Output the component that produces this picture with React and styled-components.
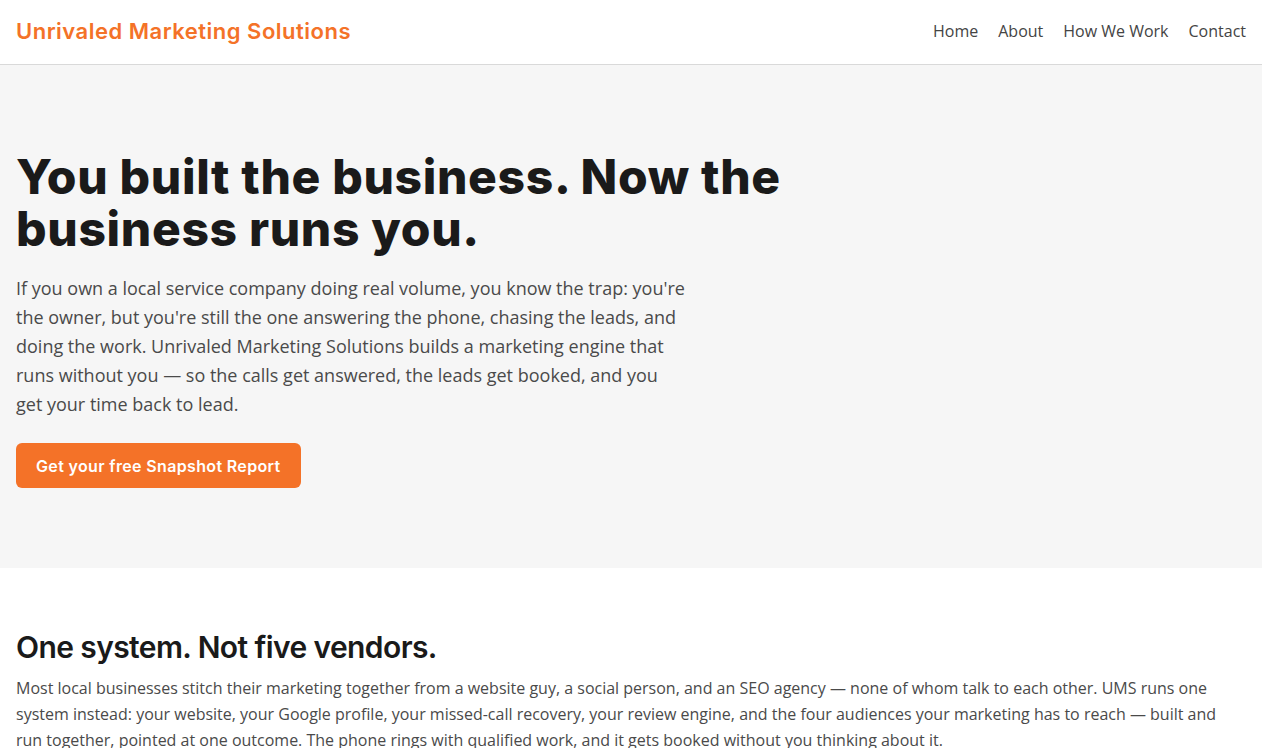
import React from "react";
import styled, { createGlobalStyle } from "styled-components";

const Global = createGlobalStyle`
  * { box-sizing: border-box; }
  body { margin: 0; background: #fff; font-family: "Open Sans", sans-serif; color: #444; }
  h1, h2, p { margin: 0; }
`;

const Header = styled.header`
  height: 65px;
  display: flex;
  align-items: center;
  justify-content: space-between;
  padding: 0 16px 2px;
  border-bottom: 1px solid #d9d9d9;
  background: #fff;
`;

const Logo = styled.a`
  font-family: "Inter", sans-serif;
  font-weight: 600;
  font-size: 22px;
  color: #f47228;
  text-decoration: none;
  letter-spacing: 0.5px;
`;

const Nav = styled.nav`
  display: flex;
  gap: 20px;
`;

const NavLink = styled.a`
  font-size: 16px;
  color: #444;
  text-decoration: none;
`;

const Hero = styled.section`
  background: #f6f6f6;
  padding: 86px 16px 80px;
`;

const Title = styled.h1`
  font-family: "Inter", sans-serif;
  font-weight: 800;
  font-size: 48px;
  line-height: 52px;
  color: #1a1a1a;
  max-width: 830px;
  letter-spacing: 0.65px;
`;

const Lead = styled.p`
  margin-top: 19px;
  font-size: 18px;
  line-height: 29px;
  max-width: 672px;
  color: #4a4a4a;
`;

const Cta = styled.a`
  display: inline-flex;
  align-items: center;
  justify-content: center;
  margin-top: 24px;
  height: 45px;
  padding: 0 20px;
  border-radius: 6px;
  background: #f47228;
  color: #fff;
  font-family: "Inter", sans-serif;
  font-weight: 600;
  font-size: 16px;
  letter-spacing: 0.35px;
  text-decoration: none;
`;

const Section = styled.section`
  padding: 60px 16px 40px;
`;

const H2 = styled.h2`
  font-family: "Inter", sans-serif;
  font-weight: 600;
  font-size: 30px;
  line-height: 38px;
  color: #1a1a1a;
  letter-spacing: -0.6px;
`;

const Body = styled.p`
  margin-top: 9px;
  font-size: 16px;
  line-height: 26px;
  color: #4a4a4a;
`;

export default function App() {
  return (
    <>
      <Global />
      <Header>
        <Logo href="#">Unrivaled Marketing Solutions</Logo>
        <Nav>
          <NavLink href="#">Home</NavLink>
          <NavLink href="#">About</NavLink>
          <NavLink href="#">How We Work</NavLink>
          <NavLink href="#">Contact</NavLink>
        </Nav>
      </Header>
      <Hero>
        <Title>You built the business. Now the business runs you.</Title>
        <Lead>
          If you own a local service company doing real volume, you know the trap: you're the owner, but you're still the one answering the phone, chasing the leads, and doing the work. Unrivaled Marketing Solutions builds a marketing engine that runs without you — so the calls get answered, the leads get booked, and you get your time back to lead.
        </Lead>
        <Cta href="#">Get your free Snapshot Report</Cta>
      </Hero>
      <Section>
        <H2>One system. Not five vendors.</H2>
        <Body>
          Most local businesses stitch their marketing together from a website guy, a social person, and an SEO agency — none of whom talk to each other. UMS runs one system instead: your website, your Google profile, your missed-call recovery, your review engine, and the four audiences your marketing has to reach — built and run together, pointed at one outcome. The phone rings with qualified work, and it gets booked without you thinking about it.
        </Body>
      </Section>
    </>
  );
}
